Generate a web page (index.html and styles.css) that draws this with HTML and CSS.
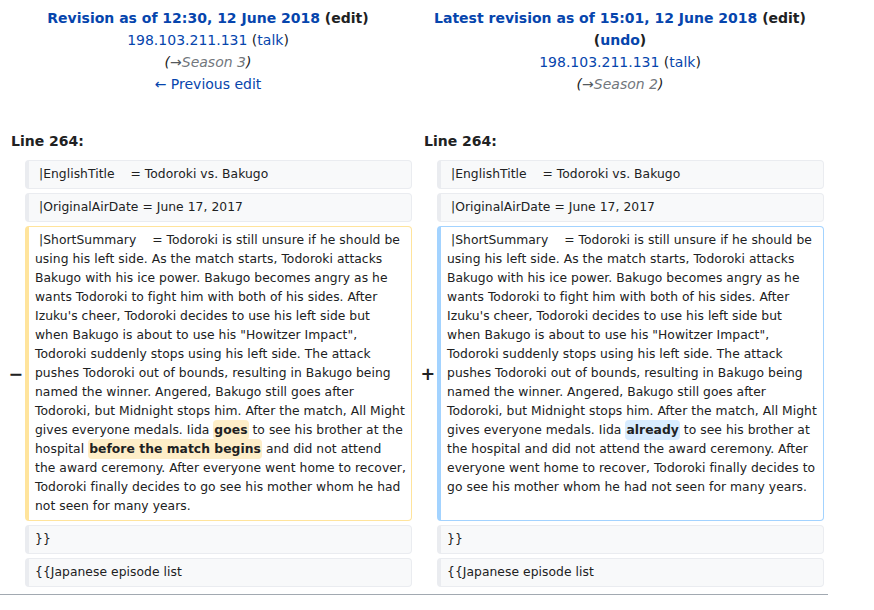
FILE: index.html
```html
<!DOCTYPE html>
<html lang="en">
<head>
<meta charset="utf-8">
<title>Diff</title>
<link rel="stylesheet" href="styles.css">
</head>
<body>
<table class="diff">
  <colgroup>
    <col class="col-marker">
    <col class="col-content">
    <col class="col-marker">
    <col class="col-content">
  </colgroup>
  <tr class="title-row">
    <td colspan="2" class="diff-title">
      <div class="title-strong"><a class="link" href="#">Revision as of 12:30, 12 June 2018</a> <span class="paren">(<a class="visited" href="#">edit</a>)</span></div>
      <div><a class="link" href="#">198.103.211.131</a> <span class="paren">(<a class="link" href="#">talk</a>)</span></div>
      <div class="comment">(<span class="arrow">→</span><span class="autocomment">Season 3</span>)</div>
      <div><a class="link" href="#">← Previous edit</a></div>
    </td>
    <td colspan="2" class="diff-title">
      <div class="title-strong"><a class="link" href="#">Latest revision as of 15:01, 12 June 2018</a> <span class="paren">(<a class="visited" href="#">edit</a>)</span></div>
      <div class="title-strong"><span class="paren">(<a class="link" href="#">undo</a>)</span></div>
      <div><a class="link" href="#">198.103.211.131</a> <span class="paren">(<a class="link" href="#">talk</a>)</span></div>
      <div class="comment">(<span class="arrow">→</span><span class="autocomment">Season 2</span>)</div>
    </td>
  </tr>
  <tr>
    <td colspan="2" class="diff-lineno lineno-left">Line 264:</td>
    <td colspan="2" class="diff-lineno lineno-right">Line 264:</td>
  </tr>
  <tr>
    <td class="diff-marker"></td>
    <td class="diff-line diff-context"><div> |EnglishTitle    = Todoroki vs. Bakugo</div></td>
    <td class="diff-marker"></td>
    <td class="diff-line diff-context"><div> |EnglishTitle    = Todoroki vs. Bakugo</div></td>
  </tr>
  <tr>
    <td class="diff-marker"></td>
    <td class="diff-line diff-context"><div> |OriginalAirDate = June 17, 2017</div></td>
    <td class="diff-marker"></td>
    <td class="diff-line diff-context"><div> |OriginalAirDate = June 17, 2017</div></td>
  </tr>
  <tr>
    <td class="diff-marker">−</td>
    <td class="diff-line diff-deleted"><div> |ShortSummary    = Todoroki is still unsure if he should be
using his left side. As the match starts, Todoroki attacks
Bakugo with his ice power. Bakugo becomes angry as he
wants Todoroki to fight him with both of his sides. After
Izuku's cheer, Todoroki decides to use his left side but
when Bakugo is about to use his "Howitzer Impact",
Todoroki suddenly stops using his left side. The attack
pushes Todoroki out of bounds, resulting in Bakugo being
named the winner. Angered, Bakugo still goes after
Todoroki, but Midnight stops him. After the match, All Might
gives everyone medals. Iida <del class="change">goes</del> to see his brother at the
hospital <del class="change">before the match begins</del> and did not attend
the award ceremony. After everyone went home to recover,
Todoroki finally decides to go see his mother whom he had
not seen for many years.</div></td>
    <td class="diff-marker">+</td>
    <td class="diff-line diff-added"><div> |ShortSummary    = Todoroki is still unsure if he should be
using his left side. As the match starts, Todoroki attacks
Bakugo with his ice power. Bakugo becomes angry as he
wants Todoroki to fight him with both of his sides. After
Izuku's cheer, Todoroki decides to use his left side but
when Bakugo is about to use his "Howitzer Impact",
Todoroki suddenly stops using his left side. The attack
pushes Todoroki out of bounds, resulting in Bakugo being
named the winner. Angered, Bakugo still goes after
Todoroki, but Midnight stops him. After the match, All Might
gives everyone medals. Iida <ins class="change">already</ins> to see his brother at
the hospital and did not attend the award ceremony. After
everyone went home to recover, Todoroki finally decides to
go see his mother whom he had not seen for many years.</div></td>
  </tr>
  <tr>
    <td class="diff-marker"></td>
    <td class="diff-line diff-context"><div>}}</div></td>
    <td class="diff-marker"></td>
    <td class="diff-line diff-context"><div>}}</div></td>
  </tr>
  <tr>
    <td class="diff-marker"></td>
    <td class="diff-line diff-context"><div>{{Japanese episode list</div></td>
    <td class="diff-marker"></td>
    <td class="diff-line diff-context"><div>{{Japanese episode list</div></td>
  </tr>
</table>
<div class="rule"></div>
</body>
</html>
```

FILE: styles.css
```css
html, body {
  margin: 0;
  padding: 0;
  background: #ffffff;
}

body {
  font-family: "DejaVu Sans", sans-serif;
  font-size: 14px;
  color: #202122;
}

.diff {
  width: 828px;
  table-layout: fixed;
  border-collapse: separate;
  border-spacing: 4px;
}

.col-marker {
  width: 17px;
}

.col-content {
  width: 387px;
}

.diff td {
  padding: 0;
}

.diff .diff-title {
  text-align: center;
  vertical-align: top;
  line-height: 22px;
  padding-top: 3px;
}

.title-strong {
  font-weight: bold;
}

.link {
  color: #0645ad;
  text-decoration: none;
}

.visited {
  color: #202122;
  text-decoration: none;
}

.paren {
  color: #202122;
}

.comment {
  font-style: italic;
  color: #202122;
}

.arrow {
  color: #54595d;
}

.autocomment {
  color: #72777d;
}

.diff .diff-lineno {
  font-weight: bold;
  line-height: 22px;
  padding-top: 31px;
  padding-bottom: 4px;
}

.diff .lineno-left {
  padding-left: 7px;
}

.diff .lineno-right {
  padding-left: 8px;
}

.diff .diff-marker {
  text-align: left;
  font-weight: bold;
  font-size: 17.5px;
  line-height: 1.2;
  vertical-align: middle;
  white-space: nowrap;
  padding-left: 4.4px;
  padding-top: 2px;
}

.diff-line {
  font-size: 12.32px;
  letter-spacing: 0.05px;
  vertical-align: top;
  border-style: solid;
  border-width: 1px 1px 1px 4px;
  border-radius: 4px;
}

.diff-line div {
  white-space: pre;
  line-height: 19px;
  padding: 4px 6px;
}

.diff-context {
  background: #f8f9fa;
  border-color: #eaecf0;
}

.diff-deleted {
  background: #ffffff;
  border-color: #ffe49c;
}

.diff-added {
  background: #ffffff;
  border-color: #a3d3ff;
}

.change {
  font-weight: bold;
  text-decoration: none;
  border-radius: 4px;
  padding: 3px 1px;
}

.diff-deleted .change {
  background: #feeec8;
}

.diff-added .change {
  background: #d8ecff;
}

.rule {
  width: 828px;
  margin-top: 3px;
  border-top: 1px solid #a2a9b1;
}
```
